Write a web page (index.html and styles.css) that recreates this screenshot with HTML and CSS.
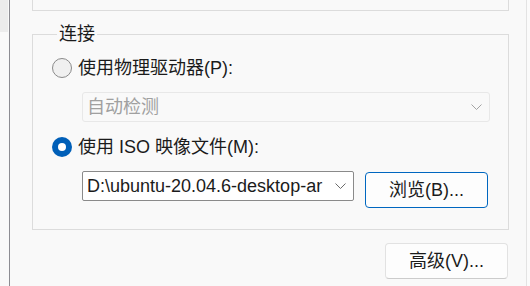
FILE: index.html
```html
<!DOCTYPE html>
<html lang="zh-CN">
<head>
<meta charset="utf-8">
<title>CD/DVD 设置</title>
<link rel="stylesheet" href="styles.css">
</head>
<body>
<div class="window">
  <nav class="nav"><div class="nav-item"></div></nav>
  <main class="panel">
    <div class="top-box"></div>
    <fieldset class="group">
      <legend class="group-title">连接</legend>
      <label class="option first">
        <span class="radio"></span>
        <span class="option-text">使用物理驱动器(P):</span>
      </label>
      <div class="combo disabled">
        <span class="combo-text">自动检测</span>
        <svg class="chev" width="11" height="6" viewBox="0 0 11 6"><path d="M0.5 0.5 L5.5 5.5 L10.5 0.5" fill="none" stroke="currentColor" stroke-width="1"/></svg>
      </div>
      <label class="option second">
        <span class="radio checked"></span>
        <span class="option-text">使用 ISO 映像文件(M):</span>
      </label>
      <div class="file-row">
        <div class="combo path">
          <span class="combo-text">D:\ubuntu-20.04.6-desktop-ar</span>
          <svg class="chev" width="11" height="6" viewBox="0 0 11 6"><path d="M0.5 0.5 L5.5 5.5 L10.5 0.5" fill="none" stroke="currentColor" stroke-width="1"/></svg>
        </div>
        <button class="btn focused">浏览(B)...</button>
      </div>
    </fieldset>
    <div class="footer">
      <button class="btn">高级(V)...</button>
    </div>
  </main>
  <div class="rest"></div>
</div>
</body>
</html>
```
FILE: styles.css
```css
html, body {
  margin: 0;
  padding: 0;
  background: #f9f9f9;
}
body {
  width: 530px;
  height: 286px;
  overflow: hidden;
  font-family: "Liberation Sans", "Noto Sans CJK SC", sans-serif;
  font-size: 18px;
  color: #1b1b1b;
}
.window {
  display: flex;
  height: 286px;
}
.nav {
  width: 9px;
  flex: none;
  border-right: 1px solid #8c8c92;
}
.nav-item {
  width: 8px;
  height: 32px;
  background: #ececec;
}
.panel {
  width: 494px;
  flex: none;
  padding-left: 22px;
  border-right: 1px solid #e3e3e3;
}
.rest {
  flex: 1;
  background: #fbfbfb;
}
.top-box {
  width: 477px;
  height: 11px;
  box-sizing: border-box;
  border: 1px solid #dcdcdc;
  border-top: none;
}
.group {
  width: 477px;
  box-sizing: border-box;
  margin: 12px 0 0 0;
  padding: 0 0 21px 19px;
  border: 1px solid #dcdcdc;
  min-width: 0;
}
.group-title {
  margin-left: 5px;
  padding: 0 2px;
  line-height: 22px;
  height: 22px;
}
.option {
  display: flex;
  align-items: center;
  gap: 6px;
  height: 22px;
  line-height: 22px;
}
.option.first { margin-top: 12px; }
.option.second { margin-top: 14px; }
.radio {
  width: 20px;
  height: 20px;
  box-sizing: border-box;
  border-radius: 50%;
  border: 1px solid #8a8a8a;
  background: #f0f0f0;
  flex: none;
  position: relative;
}
.radio.checked {
  border: none;
  background: #005fb8;
}
.radio.checked::after {
  content: "";
  position: absolute;
  left: 6px;
  top: 6px;
  width: 8px;
  height: 8px;
  border-radius: 50%;
  background: #ffffff;
}
.combo {
  display: flex;
  align-items: center;
  box-sizing: border-box;
  height: 30px;
  margin-left: 30px;
  padding: 0 7px 0 4px;
  border-radius: 3px;
}
.combo.disabled {
  width: 408px;
  margin-top: 13px;
  border: 1px solid #e8e8e8;
  background: #f9f9f9;
  color: #a0a0a0;
}
.combo-text {
  white-space: nowrap;
  line-height: 28px;
}
.chev {
  flex: none;
  margin-left: auto;
}
.combo.disabled .chev { color: #a3a3a3; }
.file-row {
  display: flex;
  align-items: flex-start;
  margin-top: 13px;
}
.combo.path {
  width: 272px;
  border: 1px solid #8a8a8a;
  background: #ffffff;
  color: #1b1b1b;
  border-radius: 2px;
}
.combo.path .chev { color: #6a6a6a; }
.btn {
  width: 123px;
  height: 36px;
  box-sizing: border-box;
  border: 1px solid #e2e2e2;
  border-bottom-color: #cccccc;
  border-radius: 4px;
  background: #fdfdfd;
  font-family: inherit;
  font-size: 18px;
  color: #1b1b1b;
  padding: 0;
  line-height: 32px;
}
.btn.focused {
  margin-left: 11px;
  margin-top: 1px;
  border: 1px solid #0067c0;
}
.footer {
  width: 477px;
  display: flex;
  justify-content: flex-end;
  margin-top: 13px;
}
.footer .btn {
  margin-right: 1px;
}
```
